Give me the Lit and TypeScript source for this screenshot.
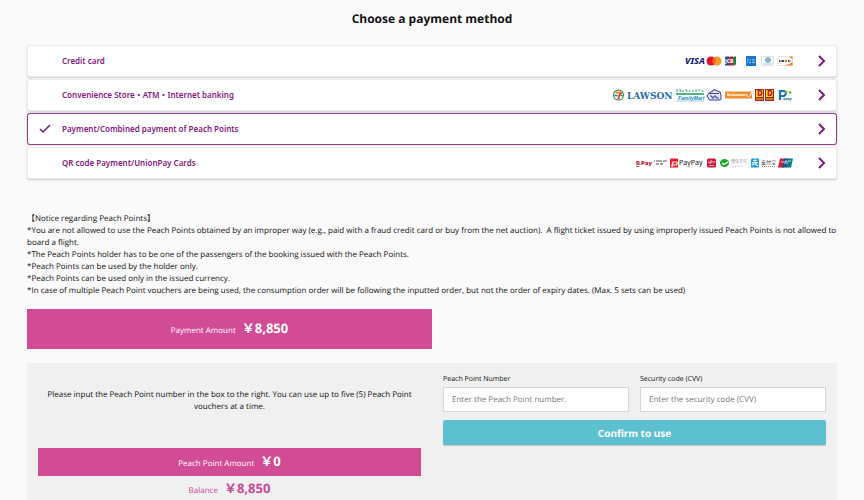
import { LitElement, html, css, svg, nothing } from "lit";
import { customElement, property, state } from "lit/decorators.js";
import { classMap } from "lit/directives/class-map.js";

const cardLogos = html`<svg width="110" height="16" viewBox="0 0 110 16" role="img" aria-label="Visa, Mastercard, JCB, American Express, Diners Club, Discover">
  <text x="1" y="11" class="b i" font-size="9" fill="#182078">VISA</text>
  <circle cx="27" cy="8" r="4.500" fill="#e8102a" /><circle cx="33" cy="8" r="4.500" fill="#f79a28" />
  <path d="M30 4.500a4.500 4.500 0 0 1 0 7a4.500 4.500 0 0 1 0-7z" fill="#fb5b18" />
  <path d="M42 3.500h3v9h-4V5q0-1.500 1-1.500z" fill="#1c4f9c" /><path d="M46 3.500h3v9h-4V5q0-1.500 1-1.500z" fill="#c41733" /><path d="M50 3.500h2v7q0 2-2 2h-1V5q0-1.500 1-1.500z" fill="#188040" />
  <text x="41" y="10" class="b" font-size="5" fill="#fff">JCB</text>
  <rect x="62" y="3" width="10" height="10" fill="#1876cc" />
  <path d="M63 7h2m1 0h1m1 0h3M63 9.500h1m1 0h2m1 0h3" stroke="#a8d0f2" />
  <rect x="77.500" y="3.500" width="12" height="9" fill="#fff" stroke="#c8d4df" stroke-width=".6" />
  <circle cx="84" cy="7" r="2.800" fill="#5b97c5" /><path d="M83 5v4M85 5v4" stroke="#dcecf7" stroke-width=".7" /><path d="M79 11h9" stroke="#a7c4da" />
  <rect x="93.500" y="3.500" width="15" height="9" rx="1" fill="#fff" stroke="#e4cfc0" stroke-width=".6" />
  <path d="M99 12.500q7-1 9.500-4v4z" fill="#f58025" /><path d="M105 3.500h3.500v3z" fill="#f58025" />
  <path d="M95 8h1m.5 0h1m.5 0h2M104 8h1m.5 0h1" stroke="#444" stroke-width="2" /><circle cx="102" cy="8" r="1.300" fill="#f06d20" />
</svg>`;

const storeLogos = html`<svg width="182" height="16" viewBox="0 0 182 16" role="img" aria-label="Seven-Eleven, Lawson, FamilyMart, Ministop, Seicomart, Daily Yamazaki, Pay-easy">
  <circle cx="6.500" cy="8" r="5.500" fill="#168451" /><circle cx="6.500" cy="8" r="4.500" fill="#fff" />
  <path d="M3.500 4.500h6.500v2h-6.500z" fill="#f58220" /><path d="M7.500 6h2.500q-2.500 2-2.500 6h-2q.5-4 2-6z" fill="#e33030" /><path d="M2.500 8.500h3m3 0h2" stroke="#168451" stroke-width="1.500" />
  <text x="15" y="12" class="s" font-size="9" fill="#266caf">LAWSON</text>
  <path d="M65 2v3M67 3h2l-1 2M70 4h2M74 2l1 3M78 3l-1 2M80 4h2M84 2v3M86 3h2M90 3l1 2" stroke="#2f9c78" fill="none" />
  <path d="M64 7h28" stroke="#16a05c" stroke-width="1.500" /><text x="66" y="13" class="f" font-size="5" fill="#168bbd">FamilyMart</text>
  <path d="M64 14h28" stroke="#7fc0e2" stroke-width=".8" />
  <path d="M97 6l4-2V3h2l5 2 1 3v4q0 1-1 1H98q-1 0-1-1l-2-3z" fill="#e9e9fa" stroke="#333b98" />
  <path d="M97 6.500h10M98 9h2v2h2V9h2v2h3" stroke="#3a3fa2" fill="none" />
  <rect x="113" y="4.500" width="27" height="7" fill="#f48c2c" /><text x="115" y="9" class="b" font-size="4" fill="#fff">Seicomart</text><path d="M134 10l3-1 3-5v3l-3 3z" fill="#fff3df" />
  ${[143, 153].map((x) => svg`<rect x=${x} y="2" width="9" height="12" fill="#a62725"/><path d=${`M${x + 1} 3h7v7h-7z`} fill="#ffd21f"/><text x=${x + 2} y="9" class="b" font-size="8" fill="#c31525">D</text><path d=${`M${x + 1} 12h7`} stroke="#e8c133"/>`)}
  <path d="M168 13V4h4q4 2 0 5h-3" fill="none" stroke="#1676b7" stroke-width="2.200" />
  <circle cx="174" cy="5" r="1.500" fill="#70b932" /><circle cx="178" cy="5.500" r="1.500" fill="#83c340" /><text x="171" y="13" class="b i" font-size="4" fill="#3575af">easy</text>
</svg>`;

const qrLogos = html`<svg width="158" height="16" viewBox="0 0 158 16" role="img" aria-label="R Pay, PayPay, d-barai, WeChat Pay, Alipay, UnionPay">
  <text x="0" y="10" class="b" font-size="6" fill="#c70d1c">R</text><path d="M0 11h4l-3 1z" fill="#c70d1c" /><text x="5" y="10" class="b" font-size="6" fill="#c70d1c">Pay</text>
  <path d="M18 6h1m1 0h2m1-1v2m1-1h2m1 0h1m1-1v2m1-1h1" stroke="#555" /><path d="M20 9h3m1 0h3" stroke="#444" />
  <path d="M35 3.500h7v9h-8V4.500q0-1 1-1z" fill="#f21b2d" /><path d="M36 12l1-5h3q3 1 0 3h-5" fill="none" stroke="#fff" stroke-width="1.200" />
  <text x="43" y="10" font-size="7" fill="#222">PayPay</text>
  <rect x="71" y="3.500" width="9" height="9" rx="1.500" fill="#d31838" /><path d="M73 6v2h2V5m1 1v2m2-2v2M73 10.500h5" stroke="#fff" stroke-width=".7" fill="none" />
  <ellipse cx="88.500" cy="8" rx="4.500" ry="4" fill="#1aa52b" /><path d="M86 8l2 1.500 4-2.500" stroke="#fff" stroke-width="1.300" fill="none" />
  <text x="95" y="8" font-size="4" fill="#888">微信支付</text><path d="M96 11h11" stroke="#bbb" stroke-width=".8" stroke-dasharray="1 .5" />
  <rect x="115" y="3.500" width="8" height="9" rx="1" fill="#169bdd" /><path d="M117 5.500h4M116 7.500h6M119 4v3q2 2 3 4M121 7q-2 4-5 3 0-3 6 1" stroke="#fff" stroke-width=".8" fill="none" />
  <text x="125" y="9" font-size="5" fill="#333">支付宝</text><path d="M126 11.500h13" stroke="#888" stroke-dasharray="1 1" />
  <path d="M144 3.500h6l-2 9h-6z" fill="#d31e38" /><path d="M148 3.500h5l-2 9h-5z" fill="#18508a" /><path d="M152 3.500h5l-2 9h-5z" fill="#087c82" />
  <path d="M145 7h3m1 2V6h2v3m1-3h3" stroke="#fff" stroke-width=".8" fill="none" />
</svg>`;

@customElement("payment-option")
class PaymentOption extends LitElement {
  @property() label = "";
  @property({ type: Boolean }) selected = false;
  @property({ attribute: false }) logos: unknown = nothing;

  static styles = css`
    :host { display: block; }
    .option {
      box-sizing: border-box; width: 100%; height: 32px; padding: 0 10px 0 11px;
      display: flex; align-items: center; border: 1px solid #ececec; border-radius: 3px;
      background: #fff; box-shadow: 0 1px 2px #0003; color: #841b7d;
      font: 600 8px/12px "Noto Sans", "Noto Sans CJK JP", sans-serif; text-align: left; cursor: pointer;
    }
    .selected { border-color: #8d438b; box-shadow: 0 0 1px #8d438b; }
    .mark { width: 23px; height: 12px; display: flex; }
    .label { flex: 1; }
    .logos { display: flex; margin-right: 24px; }
    svg { flex: none; display: block; }
    text { font-family: "Noto Sans", "Noto Sans CJK SC", sans-serif; font-weight: 400; }
    .b { font-weight: 800; }
    .i { font-style: italic; }
    .s { font-family: "DejaVu Serif", serif; font-weight: 700; }
    .f { font-family: "Liberation Sans", sans-serif; font-weight: 700; font-style: italic; }
  `;

  render() {
    return html`<button type="button" aria-pressed=${this.selected} class=${classMap({ option: true, selected: this.selected })}>
      <span class="mark">${this.selected
        ? html`<svg width="12" height="12" viewBox="0 0 12 12" fill="none" stroke="#741c72" stroke-width="1.500"><path d="M1 6l3 3 7-7" /></svg>`
        : nothing}</span>
      <span class="label">${this.label}</span>
      <span class="logos">${this.logos}</span>
      <svg width="8" height="12" viewBox="0 0 8 12" fill="none" stroke="#7c1c78" stroke-width="2"><path d="M1 1l5 5-5 5" /></svg>
    </button>`;
  }
}

@customElement("app-root")
class AppRoot extends LitElement {
  @state() private selected = 2;

  private options = [
    { label: "Credit card", logos: cardLogos },
    { label: "Convenience Store・ATM・Internet banking", logos: storeLogos },
    { label: "Payment/Combined payment of Peach Points", logos: nothing },
    { label: "QR code Payment/UnionPay Cards", logos: qrLogos },
  ];

  static styles = css`
    :host {
      display: block; box-sizing: border-box; min-height: 100vh; padding: 10px 27px 0; background: #fafafa;
      color: #111; font: 8px/12px "Open Sans", "Noto Sans CJK JP", sans-serif; text-rendering: geometricPrecision;
    }
    h1 { margin: 0 0 18px; font-size: 12px; line-height: 17px; text-align: center; }
    .options { display: grid; gap: 2px; margin-bottom: 34px; }
    .notice { margin-bottom: 12px; }
    .notice p { margin: 0; white-space: pre-wrap; }
    .amount { display: flex; align-items: baseline; justify-content: center; gap: 6px; line-height: 20px; }
    .amount strong { font-size: 13px; font-weight: 700; }
    .bar { background: #d24b95; color: #fff; }
    .payment { box-sizing: border-box; width: 50%; padding: 9px 0 8px; margin-bottom: 14px; }
    .panel { display: grid; grid-template-columns: 1fr 1fr; gap: 22px; padding: 11px; background: #f0f0f0; }
    .hint { margin: 15px 0 35px; text-align: center; }
    .points { padding: 3px 0; margin-bottom: 2px; line-height: 18px; }
    .points strong { line-height: 20px; }
    .balance { color: #c9489a; }
    .fields { display: grid; grid-template-columns: 1fr 1fr; gap: 8px 11px; align-content: start; }
    label { display: block; font-size: 7px; line-height: 12px; margin-bottom: 1px; }
    input {
      display: block; box-sizing: border-box; width: 100%; height: 25px; padding: 0 8px; border: 1px solid #d5d5d5;
      border-radius: 0; background: #fff; font: inherit; font-size: 8px; color: #222; text-rendering: inherit;
    }
    input::placeholder { color: #777; opacity: 1; }
    .confirm {
      grid-column: 1 / -1; height: 25px; padding: 0; border: 0; border-radius: 2px; background: #5dc0cf; color: #fff;
      box-shadow: 0 1px 1px #0003; font: 700 10px/16px "Noto Sans", sans-serif; text-rendering: inherit; cursor: pointer;
    }
  `;

  render() {
    return html`
      <h1>Choose a payment method</h1>
      <div class="options">
        ${this.options.map((o, i) => html`<payment-option .label=${o.label} .logos=${o.logos}
          ?selected=${i === this.selected} @click=${() => (this.selected = i)}></payment-option>`)}
      </div>
      <section class="notice">
        <p>【Notice regarding Peach Points】</p>
        <p>*You are not allowed to use the Peach Points obtained by an improper way (e.g., paid with a fraud credit card or buy from the net auction).  A flight ticket issued by using improperly issued Peach Points is not allowed to board a flight.</p>
        <p>*The Peach Points holder has to be one of the passengers of the booking issued with the Peach Points.</p>
        <p>*Peach Points can be used by the holder only.</p>
        <p>*Peach Points can be used only in the issued currency.</p>
        <p>*In case of multiple Peach Point vouchers are being used, the consumption order will be following the inputted order, but not the order of expiry dates. (Max. 5 sets can be used)</p>
      </section>
      <div class="amount bar payment"><span>Payment Amount</span><strong>￥8,850</strong></div>
      <section class="panel">
        <div>
          <p class="hint">Please input the Peach Point number in the box to the right. You can use up to five (5) Peach Point vouchers at a time.</p>
          <div class="amount bar points"><span>Peach Point Amount</span><strong>￥0</strong></div>
          <div class="amount balance"><span>Balance</span><strong>￥8,850</strong></div>
        </div>
        <form class="fields" @submit=${(e: Event) => e.preventDefault()}>
          <div><label for="number">Peach Point Number</label><input id="number" placeholder="Enter the Peach Point number." /></div>
          <div><label for="cvv">Security code (CVV)</label><input id="cvv" placeholder="Enter the security code (CVV)" /></div>
          <button class="confirm">Confirm to use</button>
        </form>
      </section>
    `;
  }
}
